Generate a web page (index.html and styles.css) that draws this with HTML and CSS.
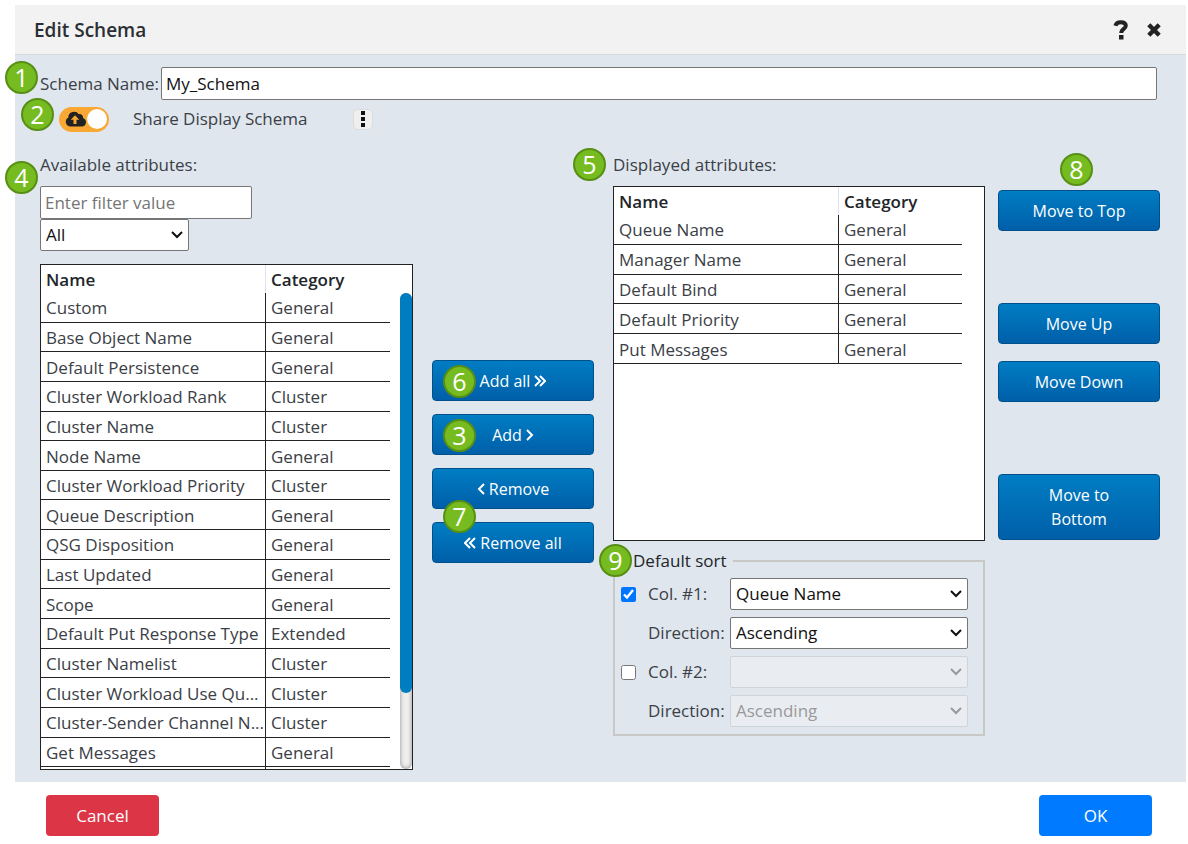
FILE: index.html
```html
<!DOCTYPE html>
<html lang="en">
  <head>
    <meta charset="utf-8" />
    <title>Edit Schema</title>

    <link rel="stylesheet" href="styles.css">
  </head>

  <body>
    <div class="dialog" role="dialog" aria-labelledby="title">
      <header class="dialog-header">
        <h1 id="title">Edit Schema</h1>
        <button class="icon-btn" type="button" aria-label="Help">
          <svg width="16" height="20" viewBox="0 0 16 20">
            <path d="M2.400 5.800C3 3.200 5 2.200 7.800 2.200c3.200 0 5 1.400 5 3.600 0 3.200-4.600 3.200-4.600 7.200" fill="none" stroke="#222" stroke-width="4" />
            <rect x="6" y="15" width="4.500" height="4.500" fill="#222" />
          </svg>
        </button>
        <button class="icon-btn" type="button" aria-label="Close">
          <svg width="16" height="16" viewBox="0 0 16 16">
            <path d="M2.800 2.800l10.400 10.400M13.200 2.800L2.800 13.200" fill="none" stroke="#222" stroke-width="4.400" />
          </svg>
        </button>
      </header>

      <main class="dialog-body">
        <div class="name-row">
          <span class="badge badge--1">1</span>
          <label for="schema-name">Schema Name:</label>
          <input class="field" type="text" id="schema-name" value="My_Schema" />
        </div>

        <div class="share-row">
          <span class="badge badge--2">2</span>
          <span class="toggle">
            <input type="checkbox" id="share" checked />
            <svg width="22" height="16" viewBox="0 0 22 16">
              <path d="M5 15.500a4.800 4.800 0 0 1-1.700-9A5.800 5.800 0 0 1 13.800 3.200a3.600 3.600 0 0 1 4.300 4A4.300 4.300 0 0 1 17.400 15.500z" fill="#222" />
              <path d="M10 4.200l4.300 4.600h-2.800V13H8.500V8.800H5.700z" fill="#f9a833" />
            </svg>
          </span>
          <label for="share">Share Display Schema</label>
          <button class="kebab" type="button" aria-label="More options">
            <svg width="4" height="16" viewBox="0 0 4 16">
              <path d="M0 0h4v4H0zM0 6h4v4H0zM0 12h4v4H0z" fill="#111" />
            </svg>
          </button>
        </div>

        <div class="columns">
          <section class="available">
            <span class="badge badge--4">4</span>
            <label class="caption" for="filter">Available attributes:</label>
            <input class="field filter" type="text" id="filter" placeholder="Enter filter value" />
            <select class="field category" aria-label="Category">
              <option>All</option>
            </select>
            <div class="list list--available">
              <table>
                <thead>
                  <tr><th class="col-name">Name</th><th>Category</th></tr>
                </thead>
                <tbody>
                  <tr><td>Custom</td><td>General</td></tr>
                  <tr><td>Base Object Name</td><td>General</td></tr>
                  <tr><td>Default Persistence</td><td>General</td></tr>
                  <tr><td>Cluster Workload Rank</td><td>Cluster</td></tr>
                  <tr><td>Cluster Name</td><td>Cluster</td></tr>
                  <tr><td>Node Name</td><td>General</td></tr>
                  <tr><td>Cluster Workload Priority</td><td>Cluster</td></tr>
                  <tr><td>Queue Description</td><td>General</td></tr>
                  <tr><td>QSG Disposition</td><td>General</td></tr>
                  <tr><td>Last Updated</td><td>General</td></tr>
                  <tr><td>Scope</td><td>General</td></tr>
                  <tr><td>Default Put Response Type</td><td>Extended</td></tr>
                  <tr><td>Cluster Namelist</td><td>Cluster</td></tr>
                  <tr><td>Cluster Workload Use Qu...</td><td>Cluster</td></tr>
                  <tr><td>Cluster-Sender Channel N...</td><td>Cluster</td></tr>
                  <tr><td>Get Messages</td><td>General</td></tr>
                  <tr><td>&nbsp;</td><td>&nbsp;</td></tr>
                </tbody>
              </table>
              <div class="scrollbar"><div class="thumb"></div></div>
            </div>
          </section>

          <div class="transfer">
            <button class="btn" type="button">
              <span class="badge badge--6">6</span>
              Add all
              <svg width="12" height="12" viewBox="0 0 12 12"><path d="M1 1l5 5-5 5M6 1l5 5-5 5" /></svg>
            </button>
            <button class="btn" type="button">
              <span class="badge badge--3">3</span>
              Add
              <svg width="8" height="12" viewBox="0 0 8 12"><path d="M1 1l5 5-5 5" /></svg>
            </button>
            <button class="btn" type="button">
              <svg width="8" height="12" viewBox="0 0 8 12"><path d="M7 1L2 6l5 5" /></svg>
              Remove
            </button>
            <button class="btn" type="button">
              <span class="badge badge--7">7</span>
              <svg width="12" height="12" viewBox="0 0 12 12"><path d="M6 1L1 6l5 5M11 1L6 6l5 5" /></svg>
              Remove all
            </button>
          </div>

          <section class="displayed">
            <span class="badge badge--5">5</span>
            <div class="caption">Displayed attributes:</div>
            <div class="list list--displayed">
              <table>
                <thead>
                  <tr><th class="col-name">Name</th><th>Category</th></tr>
                </thead>
                <tbody>
                  <tr><td>Queue Name</td><td>General</td></tr>
                  <tr><td>Manager Name</td><td>General</td></tr>
                  <tr><td>Default Bind</td><td>General</td></tr>
                  <tr><td>Default Priority</td><td>General</td></tr>
                  <tr><td>Put Messages</td><td>General</td></tr>
                </tbody>
              </table>
            </div>

            <fieldset class="sort">
              <legend><span class="badge badge--9">9</span>Default sort</legend>
              <div class="sort-grid">
                <input type="checkbox" id="use-col1" checked />
                <label for="use-col1">Col. #1:</label>
                <select class="field" aria-label="Column 1"><option>Queue Name</option></select>

                <label class="direction" for="dir1">Direction:</label>
                <select class="field" id="dir1"><option>Ascending</option></select>

                <input type="checkbox" id="use-col2" />
                <label for="use-col2">Col. #2:</label>
                <select class="field" aria-label="Column 2" disabled><option></option></select>

                <label class="direction" for="dir2">Direction:</label>
                <select class="field" id="dir2" disabled><option>Ascending</option></select>
              </div>
            </fieldset>
          </section>

          <div class="order">
            <button class="btn" type="button"><span class="badge badge--8">8</span>Move to Top</button>
            <div class="order-steps">
              <button class="btn" type="button">Move Up</button>
              <button class="btn" type="button">Move Down</button>
            </div>
            <button class="btn btn--tall" type="button">Move to Bottom</button>
          </div>
        </div>
      </main>

      <footer class="dialog-footer">
        <button class="action action--cancel" type="button">Cancel</button>
        <button class="action action--ok" type="button">OK</button>
      </footer>
    </div>
  </body>
</html>
```

FILE: styles.css
```css
* {
  box-sizing: border-box;
}

body {
  margin: 0;
  background: #fff;
  color: #3b4046;
  font: 17px/24px 'Segoe UI', 'Open Sans', 'Noto Sans', sans-serif;
}

button,
input,
select {
  margin: 0;
  font: inherit;
}

.dialog {
  margin: 5px 2px 0 15px;
}

.dialog-header {
  display: flex;
  align-items: center;
  gap: 17px;
  height: 50px;
  padding: 0 24px 0 19px;
  border-bottom: 1px solid #d6d8da;
  background: #f2f2f2;
}

.dialog-header h1 {
  flex: 1;
  margin: 0;
  color: #2b2f33;
  font-size: 19px;
  font-weight: 600;
}

.icon-btn {
  display: flex;
  padding: 0;
  border: 0;
  background: none;
}

.dialog-body {
  padding: 12px 26px 12px 25px;
  background: #dfe6ee;
}

/* form fields */

.field {
  height: 32px;
  border: 1px solid #767676;
  border-radius: 2px;
  background-color: #fff;
  color: #111;
}

input.field {
  height: 33px;
  padding: 0 4px;
}

select.field {
  padding: 0 24px 0 5px;
  background-image: url("data:image/svg+xml,%3Csvg xmlns='http://www.w3.org/2000/svg' width='12' height='8'%3E%3Cpath d='M1 1l5 5 5-5' fill='none' stroke='%23111' stroke-width='2'/%3E%3C/svg%3E");
  background-repeat: no-repeat;
  background-position: right 5px center;
  appearance: none;
}

.field::placeholder {
  color: #757575;
}

.field:disabled {
  border-color: #cfd4d9;
  background-color: #e9edf2;
  background-image: url("data:image/svg+xml,%3Csvg xmlns='http://www.w3.org/2000/svg' width='12' height='8'%3E%3Cpath d='M1 1l5 5 5-5' fill='none' stroke='%23999' stroke-width='2'/%3E%3C/svg%3E");
  color: #999;
  opacity: 1;
}

.name-row {
  display: flex;
  align-items: center;
  gap: 2px;
  position: relative;
  padding-right: 3px;
}

.name-row .field {
  flex: 1;
}

.share-row {
  display: flex;
  align-items: center;
  position: relative;
  height: 38px;
  padding-left: 19px;
}

.toggle {
  display: flex;
  position: relative;
  margin-right: 24px;
}

.toggle input {
  display: flex;
  align-items: center;
  justify-content: flex-end;
  width: 50px;
  height: 25px;
  padding: 2px;
  border-radius: 13px;
  background: #f9a833;
  appearance: none;
}

.toggle input::before {
  content: '';
  width: 20px;
  height: 20px;
  border-radius: 50%;
  background: #fff;
}

.toggle svg {
  position: absolute;
  top: 4px;
  left: 6px;
  pointer-events: none;
}

.kebab {
  display: flex;
  align-items: center;
  justify-content: center;
  width: 20px;
  height: 21px;
  margin-left: 45px;
  padding: 0;
  border: 1px solid #dcdcdc;
  border-radius: 5px;
  background: #efefef;
}

/* main columns */

.columns {
  display: grid;
  grid-template-columns: 373fr 174fr 372fr 162fr;
  column-gap: 13px;
  margin-top: 15px;
}

.available,
.displayed {
  position: relative;
  min-width: 0;
}

.caption {
  display: block;
  height: 33px;
}

.filter {
  display: block;
  width: 212px;
}

.category {
  display: block;
  width: 149px;
  margin-bottom: 13px;
}

.list {
  position: relative;
  overflow: hidden;
  padding-right: 22px;
  border: 1px solid #222;
  background: #fff;
}

.list--available {
  height: 506px;
}

.list--displayed {
  height: 355px;
}

.list table {
  width: 100%;
  border-spacing: 0;
  table-layout: fixed;
}

.list--available table {
  height: 532px;
}

.list--displayed table {
  height: 177px;
}

.list .col-name {
  width: 225px;
}

.list th {
  height: 28px;
  padding: 2px 5px 0;
  color: #212529;
  font-weight: 600;
  text-align: left;
}

.list td {
  overflow: hidden;
  padding: 2px 5px 0;
  border-bottom: 1px solid #222;
  white-space: nowrap;
}

.list th:first-child {
  border-right: 1px solid #dde3f2;
}

.list td:first-child {
  padding-right: 0;
  border-right: 1px solid #222;
}

.scrollbar {
  position: absolute;
  top: 28px;
  right: 0;
  bottom: 0;
  width: 12px;
  border-radius: 6px;
  background: #eee;
  box-shadow: inset 0 0 4px #888;
}

.thumb {
  height: 84%;
  border-radius: 6px;
  background: #007cc0;
}

/* blue buttons */

.btn {
  display: flex;
  align-items: center;
  justify-content: center;
  gap: 4px;
  position: relative;
  width: 100%;
  height: 41px;
  padding: 0;
  border: 1px solid #00508c;
  border-radius: 4px;
  background: linear-gradient(#007dc3, #005fa9);
  color: #fff;
  font-size: 16px;
}

.btn--tall {
  height: 66px;
  padding: 0 40px;
}

.btn svg {
  fill: none;
  stroke: #fff;
  stroke-width: 2;
}

.transfer {
  display: flex;
  flex-direction: column;
  gap: 13px;
  padding: 207px 6px 0;
}

.order {
  display: flex;
  flex-direction: column;
  gap: 72px;
  padding-top: 37px;
}

.order-steps {
  display: flex;
  flex-direction: column;
  gap: 17px;
}

/* sort options */

.sort {
  min-width: 0;
  margin: 8px 0 0;
  padding: 5px 15px 7px 6px;
  border: 2px solid #c8c8c8;
}

.sort legend {
  position: relative;
  margin-left: 6px;
  padding: 0 6px;
  color: #212529;
}

.sort-grid {
  display: grid;
  grid-template-columns: 19px 74px 1fr;
  align-items: center;
  column-gap: 8px;
  row-gap: 7px;
}

.sort-grid input {
  width: 15px;
  height: 15px;
}

.sort-grid label {
  white-space: nowrap;
}

.sort-grid .direction {
  grid-column: 2;
}

/* numbered callouts */

.badge {
  display: flex;
  align-items: center;
  justify-content: center;
  position: absolute;
  z-index: 1;
  width: 33px;
  height: 33px;
  padding-bottom: 2px;
  border: 2px solid #568f14;
  border-radius: 50%;
  background: #76bc21;
  color: #fff;
  font-size: 25px;
}

.badge--1 {
  top: -6px;
  left: -35px;
}

.badge--2 {
  top: -2px;
  left: -19px;
}

.badge--3 {
  top: 4px;
  left: 10px;
}

.badge--4 {
  top: 8px;
  left: -35px;
}

.badge--5 {
  top: -5px;
  left: -40px;
}

.badge--6 {
  top: 4px;
  left: 10px;
}

.badge--7 {
  top: -23px;
  left: 10px;
}

.badge--8 {
  top: -38px;
  left: 61px;
}

.badge--9 {
  top: -5px;
  left: -28px;
}

/* footer */

.dialog-footer {
  display: flex;
  justify-content: space-between;
  padding: 13px 34px 8px 31px;
}

.action {
  width: 113px;
  height: 41px;
  border: 0;
  border-radius: 4px;
  color: #fff;
}

.action--cancel {
  background: #dc3545;
}

.action--ok {
  background: #007bff;
}
```
